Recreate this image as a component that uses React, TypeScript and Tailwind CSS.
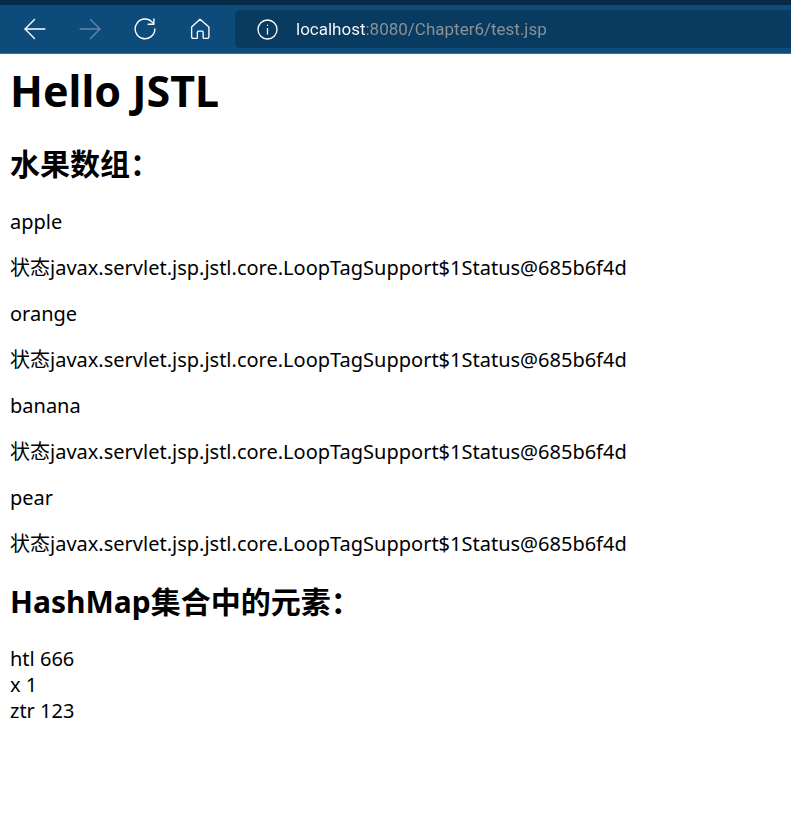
import { useState } from 'react';

const fruits = ['apple', 'orange', 'banana', 'pear'];
const status = 'javax.servlet.jsp.jstl.core.LoopTagSupport$1Status@685b6f4d';
const entries = [
  ['htl', '666'],
  ['x', '1'],
  ['ztr', '123'],
];

const navItems = [
  { label: 'Back', paths: ['M20 10.5H1', 'M10 1.5 1 10.5l9 9'], className: 'text-white' },
  { label: 'Forward', paths: ['M1 10.5h19', 'm11 1.500 9 9-9 9'], className: 'text-[#6388a8]' },
  { label: 'Refresh', paths: ['M17.900 4.600A9.400 9.400 0 1 0 19.900 10.500', 'M19 1v5h-5.500'], className: 'text-white' },
  {
    label: 'Home',
    paths: [
      'M10.500 1.200 19 8.600V18a1.500 1.500 0 0 1-1.500 1.500h-3a1 1 0 0 1-1-1V13.500a1 1 0 0 0-1-1H9a1 1 0 0 0-1 1v5a1 1 0 0 1-1 1h-3A1.500 1.500 0 0 1 2.500 18V8.600Z',
    ],
    className: 'text-white',
  },
];

function Toolbar() {
  const [url, setUrl] = useState('localhost:8080/Chapter6/test.jsp');
  return (
    <header className="border-t-5 border-b border-t-[#062a47] border-b-[#3a6d98] bg-[#0c4b7a]">
      <div className="flex h-12 items-center pl-6">
        <nav className="flex shrink-0 gap-[33px]">
          {navItems.map((item) => (
            <button key={item.label} type="button" aria-label={item.label} className={`size-[22px] ${item.className}`}>
              <svg viewBox="0 0 21 21" className="size-[22px]" fill="none" stroke="currentColor" strokeWidth="1.3" strokeLinecap="round" strokeLinejoin="round">
                {item.paths.map((d) => (
                  <path key={d} d={d} />
                ))}
              </svg>
            </button>
          ))}
        </nav>
        <div className="ml-6 flex h-[38px] min-w-0 flex-1 items-center rounded-l-[5px] bg-[#093b60] pl-[22px]">
          <button type="button" aria-label="Site information" className="size-[21px] shrink-0 text-white">
            <svg viewBox="0 0 21 21" className="size-[21px]" fill="none" stroke="currentColor" strokeWidth="1.3">
              <circle cx="10.500" cy="10.500" r="9.500" />
              <path d="M10.500 9v6.500" />
              <circle cx="10.500" cy="6.300" r="0.700" fill="currentColor" stroke="none" />
            </svg>
          </button>
          <input
            type="text"
            aria-label="Address"
            value={url}
            onChange={(e) => setUrl(e.target.value)}
            className="ml-[18px] h-[26px] min-w-0 flex-1 bg-[linear-gradient(to_right,white_69px,#8d9499_69px)] bg-clip-text font-[Roboto,'Noto_Sans',sans-serif] text-[17px] leading-[26px] text-transparent outline-none"
          />
        </div>
      </div>
    </header>
  );
}

export default function App() {
  return (
    <div className="min-h-screen bg-white font-['Noto_Sans','Noto_Sans_CJK_SC',sans-serif] text-[20px] leading-[26px] text-black">
      <Toolbar />
      <main className="px-[10px] pt-[10px]">
        <h1 className="text-[43px] leading-[54px] font-bold">Hello JSTL</h1>
        <h2 className="mt-[26px] text-[30px] leading-[40px] font-bold">水果数组：</h2>
        <div className="mt-[25px] flex flex-col gap-5">
          {fruits.map((fruit) => (
            <div key={fruit} className="flex flex-col gap-5">
              <p>{fruit}</p>
              <p>状态{status}</p>
            </div>
          ))}
        </div>
        <h2 className="mt-[25px] text-[30px] leading-[40px] font-bold">HashMap集合中的元素：</h2>
        <div className="mt-6">
          {entries.map(([key, value]) => (
            <p key={key}>
              {key} {value}
            </p>
          ))}
        </div>
      </main>
    </div>
  );
}
